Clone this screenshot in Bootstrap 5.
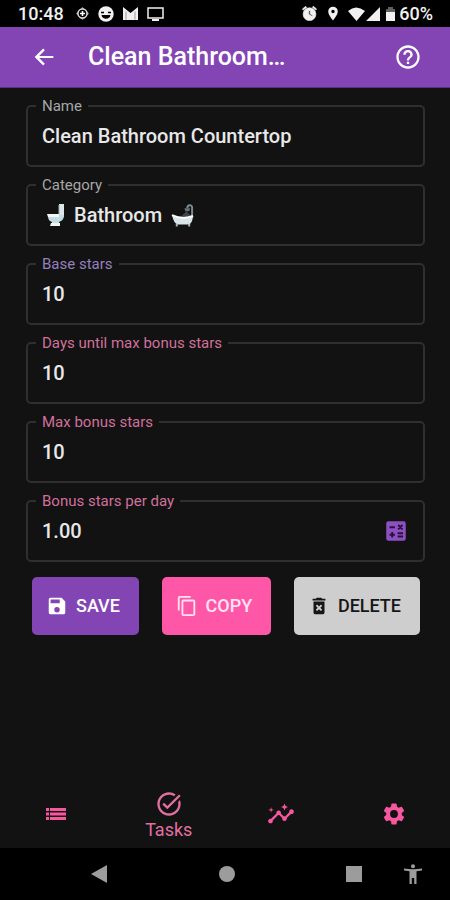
<!DOCTYPE html>
<html lang="en">
<head>
<meta charset="utf-8">
<meta name="viewport" content="width=device-width, initial-scale=1">
<title>Clean Bathroom Countertop</title>
<link href="https://cdn.jsdelivr.net/npm/bootstrap@5.3.0/dist/css/bootstrap.min.css" rel="stylesheet">
<style>
  body { background: #121212; color: #e6e6e6; font-family: Roboto, "Liberation Sans", sans-serif; }
  svg { display: block; flex: none; fill: currentColor; }
  .status { background: #000; color: #f1f1f1; height: 27px; font-size: 18px; font-weight: 500; line-height: 28px; padding: 0 17px 0 18px; }
  .notices { gap: 9px; margin-left: 12px; }
  .appbar { background: #8344b4; color: #fff; height: 61px; padding: 0 28px 0 30px; border-bottom: 1px solid #5c3080; }
  .appbar h1 { font-size: 25px; font-weight: 500; line-height: 60px; padding-left: 30px; }
  .form-area { padding: 17px 25px 0 26px; }
  .fields { gap: 17px; }
  .field { position: relative; height: 62px; border: 2px solid #2f2f2f; border-radius: 5px; padding: 0 14px; }
  .field-label { position: absolute; top: -11px; left: 8px; padding: 0 6px; background: #121212; color: #a6a6a6; font-size: 15px; line-height: 20px; white-space: nowrap; }
  .field-label.violet { color: #9580bd; }
  .field-label.rose { color: #d1709b; }
  .field input, .field select { appearance: none; background: none; border: 0; outline: 0; padding: 0; color: #e8e8e8; font-size: 20px; font-weight: 500; line-height: 28px; }
  .field input { flex: 1 1 0; min-width: 0; }
  .actions { padding: 0 5px 0 6px; margin-top: 15px; }
  .action { --bs-btn-border-width: 0px; height: 58px; padding: 0 19px 0 14px; border-radius: 5px; font-size: 18px; font-weight: 500; line-height: 24px; white-space: nowrap; }
  .action.save { background: #8344b4; color: #fff; }
  .action.copy { background: #ff57a8; color: #ffe3f1; }
  .action.delete { background: #cecece; color: #161616; }
  .tabs { height: 68px; }
  .tabs a { color: #f7579f; font-size: 18px; line-height: 24px; }
  .tabs a.active { color: #e070a0; }
  .sysnav { background: #000; height: 52px; color: #9c9c9c; padding: 0 6% 0 20%; gap: 12%; }
  .sysnav button { background: none; border: 0; padding: 0; color: inherit; }
</style>
</head>
<body class="d-flex flex-column min-vh-100">
  <div class="status d-flex align-items-center">
    <span>10:48</span>
    <div class="notices d-flex align-items-center">
      <svg width="13" height="13" viewBox="0 0 13 13"><path d="M6.500 0 13 6.500 6.500 13 0 6.500Z" opacity=".6"/><circle cx="6.500" cy="6.500" r="4.500" fill="#000" stroke="#ddd" stroke-width="1.400"/><path d="M6.500 4v5M4 6.500h5" stroke="#fff" stroke-width="1.600"/></svg>
      <svg width="16" height="16" viewBox="0 0 16 16"><circle cx="8" cy="8" r="7.700"/><path d="M3 6.500h3M10 6.500h3" stroke="#000" stroke-width="1.600"/><path d="M3.500 9h9c-.5 5-8.500 5-9 0Z" fill="#000"/></svg>
      <svg width="15" height="13" viewBox="0 0 15 13"><path d="M0 0 7.500 6 15 0v13H0Z"/><path d="M3 4.500v8M12 4.500v8" stroke="#999"/></svg>
      <svg width="17" height="14" viewBox="0 0 17 14"><path d="M1 1h15v10H1Z" fill="none" stroke="currentColor" stroke-width="1.500"/><path d="M5 12h7v2H5Z"/></svg>
    </div>
    <div class="d-flex align-items-center ms-auto">
      <svg class="me-2" width="17" height="17" viewBox="0 0 24 24"><path d="m22 5.700-4.600-3.900-1.300 1.500 4.600 3.900L22 5.700zM7.900 3.400 6.600 1.900 2 5.700l1.300 1.500 4.600-3.800zM12 4a9 9 0 1 0 0 18 9 9 0 0 0 0-18zm-1 4h2v4.600l3.500 2.100-.8 1.300-4.700-2.800V8z" fill-rule="evenodd" stroke="currentColor"/></svg>
      <svg class="me-2" width="14" height="15" viewBox="3 1 18 22"><path d="M12 2a7 7 0 0 0-7 7c0 5.200 7 13 7 13s7-7.800 7-13a7 7 0 0 0-7-7Zm0 9.500a2.500 2.500 0 1 1 0-5 2.500 2.500 0 0 1 0 5Z" fill-rule="evenodd"/></svg>
      <svg class="me-1" width="34" height="14" viewBox="0 0 34 14"><path d="M0 4Q8-3 17 4L8.500 14ZM18 14 32 0v14Z"/></svg>
      <svg class="me-1" width="9" height="14" viewBox="0 0 9 14"><path d="M2 0h5v2h2v4H0V2h2Z" opacity=".4"/><path d="M0 5h9v9H0Z"/></svg>
      <span>60%</span>
    </div>
  </div>

  <header class="appbar d-flex align-items-center">
    <button type="button" class="btn border-0 p-0 text-white" aria-label="Back"><svg width="28" height="28" viewBox="0 0 24 24"><path d="M20 11.100H7.830l4.880-4.980L11.300 4.700 4 12l7.300 7.300 1.410-1.420L7.830 12.900H20v-1.800Z"/></svg></button>
    <h1 class="m-0 flex-grow-1 text-truncate">Clean Bathroom…</h1>
    <button type="button" class="btn border-0 p-0 text-white" aria-label="Help"><svg width="28" height="28" viewBox="0 0 24 24"><path d="M11 18h2v-2h-2v2zm1-16C6.480 2 2 6.480 2 12s4.480 10 10 10 10-4.480 10-10S17.520 2 12 2zm0 18c-4.410 0-8-3.590-8-8s3.590-8 8-8 8 3.590 8 8-3.590 8-8 8zm0-14c-2.210 0-4 1.790-4 4h2c0-1.100.9-2 2-2s2 .9 2 2c0 2-3 1.750-3 5h2c0-2.250 3-2.500 3-5 0-2.210-1.790-4-4-4z"/></svg></button>
  </header>

  <main class="flex-grow-1">
    <form class="form-area">
      <div class="fields d-grid">
        <div class="field d-flex align-items-center"><label class="field-label" for="name">Name</label><input id="name" type="text" value="Clean Bathroom Countertop"></div>
        <div class="field d-flex align-items-center">
          <label class="field-label" for="category">Category</label>
          <svg class="ms-1 me-2" width="20" height="24" viewBox="0 0 20 24"><path d="M13 1h5v13h-5Z" fill="#dce7e9"/><path d="M13 2v11" stroke="#9bb0b6"/><path d="M2 12h16c0 4-2 6-5 7l1 4H5l1-4c-3-1-4-3-4-7Z" fill="#c4dde3"/><path d="M1 11h12v3H2Z" fill="#f5f7f7"/><path d="M5 20h9v3H4Z" fill="#eef5f7"/></svg>
          <select id="category"><option>Bathroom</option></select>
          <svg class="ms-2" width="23" height="25" viewBox="0 0 24 25"><path d="M22 15V4c0-3-5-3-5 1" fill="none" stroke="#7d8c93" stroke-width="2"/><path d="M14 5h6l-1 3h-4Z" fill="#65737a"/><path d="M11 13 16 8l5 5" fill="#39464d"/><path d="M1 12q11 5 22 1-1 9-5 9H7q-4-1-6-10Z" fill="#d9e5e8"/><path d="M1 12q11 5 22 1" fill="none" stroke="#fff" stroke-width="2"/><path d="M6 21v3M19 21v3" stroke="#aebcc1" stroke-width="2"/></svg>
        </div>
        <div class="field d-flex align-items-center"><label class="field-label violet" for="base">Base stars</label><input id="base" type="text" inputmode="numeric" value="10"></div>
        <div class="field d-flex align-items-center"><label class="field-label rose" for="days">Days until max bonus stars</label><input id="days" type="text" inputmode="numeric" value="10"></div>
        <div class="field d-flex align-items-center"><label class="field-label rose" for="max">Max bonus stars</label><input id="max" type="text" inputmode="numeric" value="10"></div>
        <div class="field d-flex align-items-center"><label class="field-label rose" for="rate">Bonus stars per day</label><input id="rate" type="text" inputmode="decimal" value="1.00">
          <button type="button" class="btn border-0 p-0" aria-label="Calculate"><svg width="26" height="26" viewBox="0 0 24 24"><rect x="3" y="3" width="18" height="18" rx="2" fill="#8e4fc2"/><path d="M6 8.500h5M8.500 13v5M6 15.500h5M13.500 14h5M13.500 17h5M14 10.500l4-4M14 6.500l4 4" stroke="#27143a" stroke-width="1.800"/></svg></button>
        </div>
      </div>
      <div class="actions d-flex justify-content-between">
        <button type="submit" class="action save btn d-flex align-items-center gap-2"><svg width="22" height="22" viewBox="0 0 24 24"><path d="M17 3H5a2 2 0 0 0-2 2v14a2 2 0 0 0 2 2h14a2 2 0 0 0 2-2V7l-4-4zm-5 16a3 3 0 1 1 0-6 3 3 0 0 1 0 6zm3-10H5V5h10v4z"/></svg>SAVE</button>
        <button type="button" class="action copy btn d-flex align-items-center gap-2"><svg width="22" height="22" viewBox="0 0 24 24"><path d="M16 1H4a2 2 0 0 0-2 2v14h2V3h12V1zm3 4H8a2 2 0 0 0-2 2v14a2 2 0 0 0 2 2h11a2 2 0 0 0 2-2V7a2 2 0 0 0-2-2zm0 16H8V7h11v14z"/></svg>COPY</button>
        <button type="button" class="action delete btn d-flex align-items-center gap-2"><svg width="22" height="22" viewBox="0 0 24 24"><path d="M6 19c0 1.100.9 2 2 2h8c1.100 0 2-.9 2-2V7H6v12zm2.460-7.120 1.410-1.410L12 12.590l2.120-2.120 1.410 1.410L13.410 14l2.120 2.120-1.410 1.410L12 15.410l-2.120 2.120-1.410-1.410L10.590 14l-2.130-2.120zM15.500 4l-1-1h-5l-1 1H5v2h14V4z"/></svg>DELETE</button>
      </div>
    </form>
  </main>

  <nav class="tabs row g-0" aria-label="Main">
    <a href="#list" class="col d-flex align-items-center justify-content-center" aria-label="List"><svg width="24" height="24" viewBox="0 0 24 24"><path d="M2 6h3v3H2zm4 0h16v3H6zM2 10.500h3v3H2zm4 0h16v3H6zM2 15h3v3H2zm4 0h16v3H6z"/></svg></a>
    <a href="#tasks" class="active col d-flex flex-column align-items-center justify-content-center text-decoration-none pt-1"><svg width="28" height="28" viewBox="0 0 24 24"><path d="M22 5.180 10.590 16.600l-4.240-4.240 1.410-1.410 2.830 2.830 10-10L22 5.180zM19.790 10.220c.13.570.21 1.170.21 1.780 0 4.420-3.580 8-8 8s-8-3.580-8-8 3.580-8 8-8c1.580 0 3.040.46 4.280 1.250l1.440-1.440A9.900 9.900 0 0 0 12 2C6.480 2 2 6.480 2 12s4.480 10 10 10 10-4.480 10-10c0-1.190-.22-2.330-.6-3.390l-1.610 1.610z"/></svg>Tasks</a>
    <a href="#stats" class="col d-flex align-items-center justify-content-center" aria-label="Statistics"><svg width="28" height="28" viewBox="0 0 24 24"><path d="M21 8c-1.450 0-2.260 1.440-1.930 2.510l-3.550 3.560c-.3-.09-.74-.09-1.040 0l-2.550-2.550C12.270 10.450 11.460 9 10 9c-1.450 0-2.270 1.440-1.930 2.520l-4.560 4.550C2.440 15.740 1 16.550 1 18c0 1.100.9 2 2 2 1.450 0 2.260-1.440 1.930-2.510l4.550-4.560c.3.090.74.090 1.040 0l2.550 2.550C12.730 16.550 13.540 18 15 18c1.450 0 2.270-1.440 1.930-2.520l3.560-3.550C21.560 12.260 23 11.450 23 10c0-1.100-.9-2-2-2zM15 9l.94-2.070L18 6l-2.060-.93L15 3l-.92 2.070L12 6l2.080.930zM3.500 11 4 9l2-.5L4 8l-.5-2L3 8l-2 .5L3 9z"/></svg></a>
    <a href="#settings" class="col d-flex align-items-center justify-content-center" aria-label="Settings"><svg width="26" height="26" viewBox="0 0 24 24"><path d="M19.140 12.940c.04-.3.060-.61.060-.94 0-.32-.02-.64-.07-.94l2.030-1.580a.49.49 0 0 0 .12-.61l-1.920-3.320a.49.49 0 0 0-.59-.22l-2.390.96a7 7 0 0 0-1.620-.94l-.36-2.540a.48.48 0 0 0-.48-.41h-3.840a.47.47 0 0 0-.47.410l-.36 2.540c-.59.24-1.130.57-1.620.94l-2.390-.96a.47.47 0 0 0-.59.220L2.740 8.870a.47.47 0 0 0 .12.610l2.030 1.580a6 6 0 0 0-.02 1.880l-2.030 1.580a.49.49 0 0 0-.12.610l1.920 3.320c.12.220.37.290.59.220l2.390-.96c.5.380 1.030.7 1.620.94l.36 2.540c.05.240.24.410.48.410h3.840c.24 0 .44-.17.470-.41l.36-2.540a7 7 0 0 0 1.620-.94l2.390.96c.22.080.47 0 .59-.22l1.920-3.320a.47.47 0 0 0-.12-.61l-2.010-1.580zM12 15.600a3.600 3.600 0 1 1 0-7.200 3.600 3.600 0 0 1 0 7.200z"/></svg></a>
  </nav>

  <div class="sysnav d-flex align-items-center">
    <div class="d-flex flex-grow-1 align-items-center justify-content-between">
      <button type="button" aria-label="System back"><svg width="18" height="18" viewBox="0 0 18 18"><path d="M1 9 17 0v18Z"/></svg></button>
      <button type="button" aria-label="System home"><svg width="18" height="18" viewBox="0 0 18 18"><circle cx="9" cy="9" r="8"/></svg></button>
      <button type="button" aria-label="Recent apps"><svg width="18" height="18" viewBox="0 0 18 18"><path d="M1 1h16v16H1Z"/></svg></button>
    </div>
    <button type="button" aria-label="Accessibility"><svg width="20" height="20" viewBox="0 0 20 20"><circle cx="10" cy="2.200" r="2"/><path d="M1 4.500q9 1.500 18 0v2l-5.500.8V20h-2.300v-6H8.800v6H6.500V7.300L1 6.500Z"/></svg></button>
  </div>
<script src="https://cdn.jsdelivr.net/npm/bootstrap@5.3.0/dist/js/bootstrap.bundle.min.js"></script>
</body>
</html>
